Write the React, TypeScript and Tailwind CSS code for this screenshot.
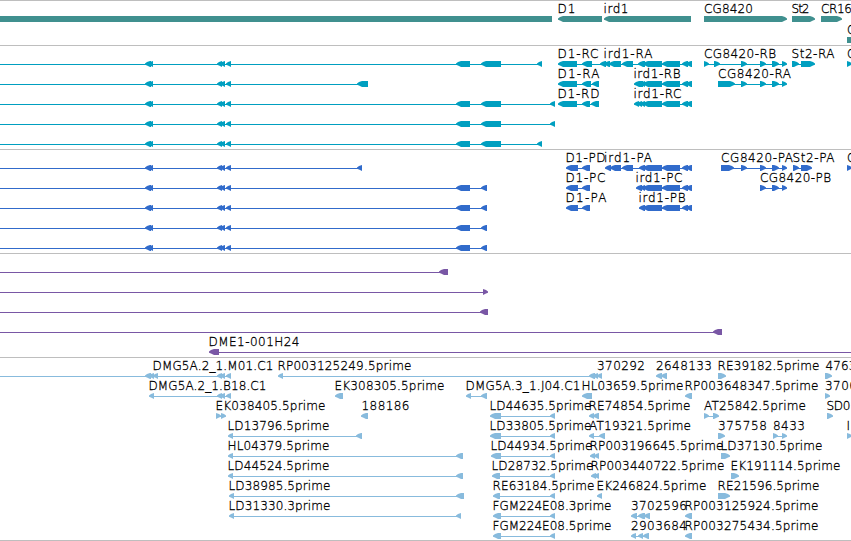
type Exon = [number, number]

interface Feature {
  exons: Exon[]
  label?: string
  // label start and width
  at?: number
  len?: number
  forward?: boolean
  // connector line, when it reaches past the exons
  from?: number
  to?: number
  flat?: boolean
}

interface TrackData {
  name: string
  color: string
  height: number
  pitch?: number
  rows: Feature[][]
}

const common: Exon[] = [[145, 151], [148, 153], [217, 222], [220, 225], [226, 231]]
const mid: Exon[] = [[456, 470], [481, 501]]
const ird: Exon[] = [[643, 662], [662, 680], [682, 688], [686, 692]]
const cg: Exon[] = [[741, 747], [760, 766], [772, 779], [782, 787]]

const tracks: TrackData[] = [
  {
    name: "genes",
    color: "#40908f",
    height: 44,
    pitch: 21,
    rows: [
      [
        { exons: [[-10, 552]], flat: true },
        { label: "D1", at: 557.5, len: 18, exons: [[558, 602]] },
        { label: "ird1", at: 603.5, len: 25, exons: [[604, 691]] },
        { label: "CG8420", at: 704, len: 49, exons: [[704, 787]], forward: true },
        { label: "St2", at: 791.5, len: 18, exons: [[792, 815]], forward: true },
        { label: "CR16", at: 821, len: 31, exons: [[821, 842]], forward: true },
      ],
      [{ label: "C", at: 847, exons: [[847, 870]], flat: true }],
    ],
  },
  {
    name: "transcripts",
    color: "#009fc0",
    height: 103,
    rows: [
      [
        { exons: [...common, ...mid, [537, 542]], from: 0 },
        { label: "D1-RC", at: 557.5, len: 41, exons: [[558, 577], [582, 592]], to: 602 },
        { label: "ird1-RA", at: 603.5, len: 49, exons: [[600, 606], [604, 610], [609, 621], [622, 633], [638, 645], ...ird] },
        { label: "CG8420-RB", at: 704, len: 72, exons: [[704, 709], [714, 720], ...cg], forward: true },
        { label: "St2-RA", at: 791.5, len: 43, exons: [[792, 799], [801, 815]], forward: true },
        { label: "C", at: 847, exons: [[847, 852]], forward: true },
      ],
      [
        { exons: [...common, [357, 368]], from: 0 },
        { label: "D1-RA", at: 557.5, len: 42, exons: [[558, 577], [582, 591], [592, 599]] },
        { label: "ird1-RB", at: 633.5, len: 47, exons: [[634, 643], [640, 645], ...ird] },
        { label: "CG8420-RA", at: 718, len: 73, exons: [[718, 735], ...cg], forward: true },
      ],
      [
        { exons: [...common, ...mid, [550, 555]], from: 0 },
        { label: "D1-RD", at: 557.5, len: 42, exons: [[558, 577], [582, 590], [591, 599]] },
        { label: "ird1-RC", at: 633.5, len: 48, exons: [[634, 639], [637, 642], [640, 645], ...ird] },
      ],
      [{ exons: [...common, ...mid, [550, 555]], from: 0 }],
      [{ exons: [...common, ...mid, [537, 542]], from: 0 }],
    ],
  },
  {
    name: "proteins",
    color: "#316bcb",
    height: 103,
    rows: [
      [
        { exons: [...common, [357, 362]], from: 0 },
        { label: "D1-PD", at: 565.5, len: 40, exons: [[566, 578], [582, 590]] },
        { label: "ird1-PA", at: 604, len: 48, exons: [[605, 611], [610, 621], [622, 633], [639, 645], ...ird] },
        { label: "CG8420-PA", at: 721, len: 72, exons: [[721, 734], ...cg], forward: true },
        { label: "St2-PA", at: 792.5, len: 42, exons: [[793, 799], [801, 812]], forward: true },
        { label: "C", at: 847, exons: [[847, 852]], forward: true },
      ],
      [
        { exons: [...common, [456, 470], [481, 487]], from: 0 },
        { label: "D1-PC", at: 565.5, len: 40, exons: [[566, 578], [582, 590]] },
        { label: "ird1-PC", at: 635.5, len: 47, exons: [[636, 642], [640, 645], ...ird] },
        { label: "CG8420-PB", at: 760, len: 71, exons: [[760, 766], [772, 779], [782, 787]], forward: true },
      ],
      [
        { exons: [...common, [456, 470], [481, 487]], from: 0 },
        { label: "D1-PA", at: 565.5, len: 41, exons: [[566, 578], [582, 590]] },
        { label: "ird1-PB", at: 638.5, len: 47, exons: [[639, 645], ...ird] },
      ],
      [{ exons: [...common, [456, 470], [481, 487]], from: 0 }],
      [{ exons: [...common, [456, 470], [481, 487]], from: 0 }],
    ],
  },
  {
    name: "clones",
    color: "#7957a5",
    height: 103,
    rows: [
      [{ exons: [[439, 448]], from: 0 }],
      [{ exons: [[483, 488]], from: 0, forward: true }],
      [{ exons: [[480, 488]], from: 0 }],
      [{ exons: [[713, 722]], from: 0 }],
      [{ label: "DME1-001H24", at: 208.5, len: 91, exons: [[209, 219]], to: 851 }],
    ],
  },
  {
    name: "ests",
    color: "#88bbdd",
    height: 182,
    rows: [
      [
        { label: "DMG5A.2_1.M01.C1", at: 152.5, len: 121, exons: [[145, 151], [149, 154], [153, 158], [217, 222], [220, 225], [226, 231]], from: 0 },
        { label: "RP003125249.5prime", at: 277.5, len: 134, exons: [[278, 283], [589, 595]] },
        { label: "370292", at: 597, len: 48, exons: [[593, 598], [597, 602]] },
        { label: "2648133", at: 656, len: 56, exons: [[656, 662], [661, 667]] },
        { label: "RE39182.5prime", at: 717.5, len: 102, exons: [[718, 726]], forward: true },
        { label: "4763", at: 825.5, len: 31, exons: [[825, 832]], forward: true },
      ],
      [
        { label: "DMG5A.2_1.B18.C1", at: 148.5, len: 118, exons: [[149, 154], [217, 222], [220, 225], [226, 231]] },
        { label: "EK308305.5prime", at: 334.5, len: 110, exons: [[335, 343]] },
        { label: "DMG5A.3_1.J04.C1", at: 465.5, len: 115, exons: [[466, 471], [481, 487]] },
        { label: "HL03659.5prime", at: 581.5, len: 102, exons: [[582, 592]] },
        { label: "RP003648347.5prime", at: 684.5, len: 134, exons: [[685, 692]] },
        { label: "3706", at: 825, len: 32, exons: [[825, 830]], forward: true },
      ],
      [
        { label: "EK038405.5prime", at: 215.5, len: 110, exons: [[216, 221], [221, 226]], forward: true },
        { label: "188186", at: 361.5, len: 48, exons: [[361, 368]] },
        { label: "LD44635.5prime", at: 489.5, len: 102, exons: [[490, 501], [550, 555]] },
        { label: "RE74854.5prime", at: 588.5, len: 102, exons: [[589, 594], [593, 599]] },
        { label: "AT25842.5prime", at: 704, len: 102, exons: [[704, 709], [713, 719]], forward: true },
        { label: "SD0", at: 826.5, len: 24, exons: [[827, 833]], forward: true },
      ],
      [
        { label: "LD13796.5prime", at: 227.5, len: 102, exons: [[228, 233], [356, 362]] },
        { label: "LD33805.5prime", at: 489.5, len: 102, exons: [[490, 501], [550, 555]] },
        { label: "AT19321.5prime", at: 589, len: 102, exons: [[589, 594], [599, 605]] },
        { label: "375758", at: 718, len: 49, exons: [[718, 725]], forward: true },
        { label: "8433", at: 773, len: 32, exons: [[773, 778], [782, 787]], forward: true },
        { label: "I", at: 846.5, exons: [[847, 852]], forward: true },
      ],
      [
        { label: "HL04379.5prime", at: 227.5, len: 102, exons: [[228, 233], [456, 463]] },
        { label: "LD44934.5prime", at: 490.5, len: 102, exons: [[491, 501], [550, 555]] },
        { label: "RP003196645.5prime", at: 589.5, len: 134, exons: [[590, 595], [594, 599]] },
        { label: "LD37130.5prime", at: 720.5, len: 102, exons: [[721, 730]], forward: true },
      ],
      [
        { label: "LD44524.5prime", at: 227.5, len: 102, exons: [[228, 233], [456, 463]] },
        { label: "LD28732.5prime", at: 491.5, len: 102, exons: [[492, 500], [550, 555]] },
        { label: "RP003440722.5prime", at: 590.5, len: 134, exons: [[591, 596], [594, 599]] },
        { label: "EK191114.5prime", at: 730.5, len: 110, exons: [[731, 739]], forward: true },
      ],
      [
        { label: "LD38985.5prime", at: 228.5, len: 102, exons: [[229, 234], [456, 464]] },
        { label: "RE63184.5prime", at: 492.5, len: 102, exons: [[493, 500], [550, 555]] },
        { label: "EK246824.5prime", at: 596.5, len: 110, exons: [[597, 602]] },
        { label: "RE21596.5prime", at: 717.5, len: 102, exons: [[718, 730]], forward: true },
      ],
      [
        { label: "LD31330.3prime", at: 228.5, len: 102, exons: [[229, 234], [456, 461]] },
        { label: "FGM224E08.3prime", at: 492.5, len: 119, exons: [[493, 501], [550, 555]] },
        { label: "3702596", at: 631, len: 56, exons: [[631, 637], [638, 645], [644, 650]] },
        { label: "RP003125924.5prime", at: 684.5, len: 134, exons: [[685, 692]] },
      ],
      [
        { label: "FGM224E08.5prime", at: 492.5, len: 119, exons: [[493, 501], [550, 555]] },
        { label: "2903684", at: 631, len: 56, exons: [[631, 636], [638, 643], [643, 649]] },
        { label: "RP003275434.5prime", at: 684.5, len: 134, exons: [[685, 692]] },
      ],
    ],
  },
]

// arrow with a slightly rounded head, pointing along the strand
function exonPoints([a, b]: Exon, y: number, forward?: boolean) {
  const head = Math.min(5, b - a)
  const tip = forward ? b : a
  const tail = forward ? a : b
  const dir = forward ? -1 : 1
  const x1 = tip + dir * 2
  const x2 = tip + dir * head
  return `${tip},${y - 0.5} ${x1},${y - 2} ${x2},${y - 3} ${tail},${y - 3} ${tail},${y + 3} ${x2},${y + 3} ${x1},${y + 1.5} ${tip},${y + 0.7}`
}

function Glyph({ feature, y }: { feature: Feature; y: number }) {
  const { exons, label, at, len, forward, flat } = feature
  const from = feature.from ?? exons[0][0] + 1
  const to = feature.to ?? exons[exons.length - 1][1] - 1

  return (
    <g>
      {flat ? (
        <rect x={exons[0][0]} y={y - 3} width={exons[0][1] - exons[0][0]} height={6} />
      ) : (
        <>
          <rect x={from} y={y} width={to - from} height={1} />
          {exons.map((exon) => (
            <polygon key={exon[0]} points={exonPoints(exon, y, forward)} />
          ))}
        </>
      )}
      {label && (
        <text x={at} y={y - 6} textLength={len} className="fill-black stroke-black stroke-[0.3px] font-extralight">
          {label}
        </text>
      )}
    </g>
  )
}

function Track({ track }: { track: TrackData }) {
  const { name, color, height, pitch = 20, rows } = track

  return (
    <section aria-label={name} className="border-b border-[#bebebe]">
      <svg width={851} height={height} fill={color} className="block font-['DejaVu_Sans',sans-serif] text-[12px]">
        {rows.map((row, i) => (
          <g key={i}>
            {row.map((feature, j) => (
              <Glyph key={j} feature={feature} y={18 + i * pitch} />
            ))}
          </g>
        ))}
      </svg>
    </section>
  )
}

export default function App() {
  return (
    <main className="flex h-[541px] w-[851px] flex-col overflow-hidden border-t border-[#bebebe] bg-white">
      {tracks.map((track) => (
        <Track key={track.name} track={track} />
      ))}
    </main>
  )
}
